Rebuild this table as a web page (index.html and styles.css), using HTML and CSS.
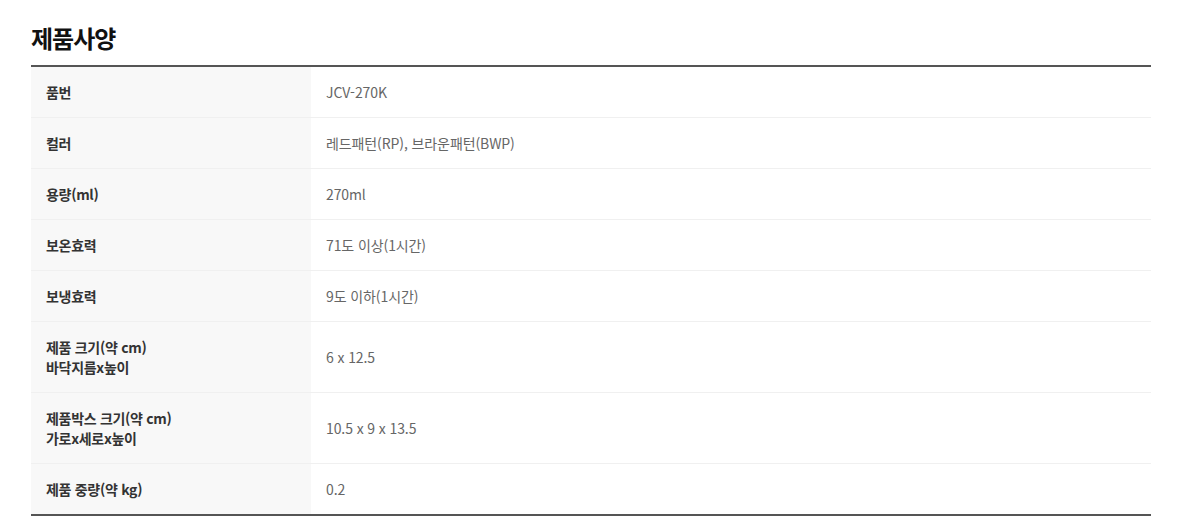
FILE: index.html
```html
<!DOCTYPE html>
<html lang="ko">
<head>
<meta charset="utf-8">
<link rel="stylesheet" href="styles.css">
</head>
<body>
<section class="spec">
  <h2 class="spec-title">제품사양</h2>
  <table class="spec-table">
    <tbody>
      <tr><th>품번</th><td>JCV-270K</td></tr>
      <tr><th>컬러</th><td>레드패턴(RP), 브라운패턴(BWP)</td></tr>
      <tr><th>용량(ml)</th><td>270ml</td></tr>
      <tr><th>보온효력</th><td>71도 이상(1시간)</td></tr>
      <tr><th>보냉효력</th><td>9도 이하(1시간)</td></tr>
      <tr><th>제품 크기(약 cm)<br>바닥지름x높이</th><td>6 x 12.5</td></tr>
      <tr><th>제품박스 크기(약 cm)<br>가로x세로x높이</th><td>10.5 x 9 x 13.5</td></tr>
      <tr><th>제품 중량(약 kg)</th><td>0.2</td></tr>
    </tbody>
  </table>
</section>
</body>
</html>
```

FILE: styles.css
```css
html, body {
  margin: 0;
  padding: 0;
  background: #fff;
}
body {
  font-family: "Noto Sans CJK KR", "Noto Sans", sans-serif;
  color: #333;
}
.spec {
  padding: 22px 34px 0 31px;
}
.spec-title {
  margin: 0 0 11px;
  font-size: 24px;
  line-height: 32px;
  font-weight: 700;
  color: #111;
  letter-spacing: -1px;
}
.spec-table {
  width: 1120px;
  border-collapse: collapse;
  border-top: 2px solid #555;
  border-bottom: 2px solid #555;
}
.spec-table th,
.spec-table td {
  padding: 15px 15px;
  font-size: 14px;
  line-height: 20px;
  text-align: left;
  vertical-align: middle;
  border-bottom: 1px solid #f0f0f0;
}
.spec-table th {
  width: 250px;
  background: #f8f8f8;
  color: #333;
  font-weight: 700;
  letter-spacing: -0.3px;
}
.spec-table td {
  color: #666;
  font-weight: 400;
  letter-spacing: -0.1px;
}
.spec-table tr:last-child th,
.spec-table tr:last-child td {
  border-bottom: 0;
}
```
